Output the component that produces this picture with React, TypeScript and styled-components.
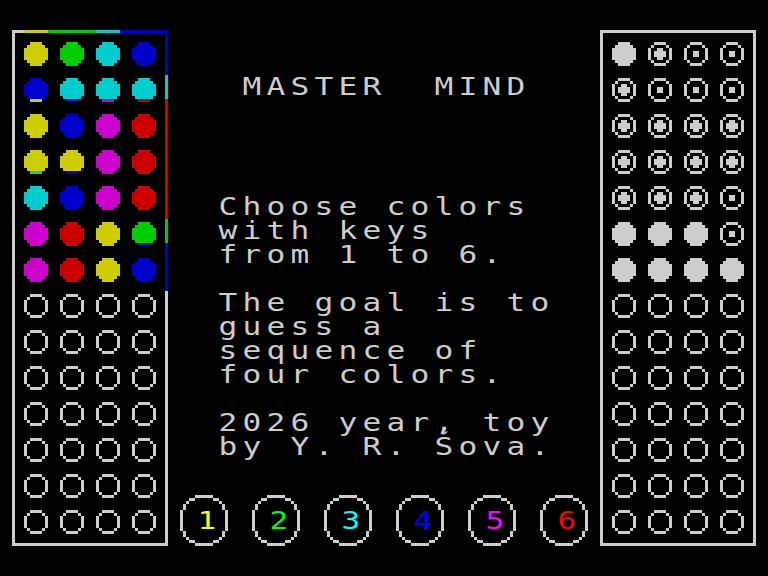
import React from "react"
import styled, { createGlobalStyle } from "styled-components"

const ink = {
    grey: "#cdcdcd",
    Y: "#cdcd00",
    G: "#00cd00",
    C: "#00cdcd",
    B: "#0000cd",
    M: "#cd00cd",
    R: "#cd0000",
}

const bright = ["#ffff00", "#00ff00", "#00ffff", "#0000ff", "#ff00ff", "#ff0000"]

type PegColor = "Y" | "G" | "C" | "B" | "M" | "R"

// guesses, top to bottom
const guesses: PegColor[][] = [
    ["Y", "G", "C", "B"],
    ["B", "C", "C", "C"],
    ["Y", "B", "M", "R"],
    ["Y", "Y", "M", "R"],
    ["C", "B", "M", "R"],
    ["M", "R", "Y", "G"],
    ["M", "R", "Y", "B"],
]

// F = right place, D = right colour, S = miss
const marks: string[] = ["FDSS", "DSSS", "DDDD", "DDDD", "DDDS", "FFFS", "FFFF"]

const TOTAL_ROWS = 14

const shapes: Record<string, string[]> = {
    filled: ["..XXXX..", ".XXXXXX.", "XXXXXXXX", "XXXXXXXX", "XXXXXXXX", "XXXXXXXX", ".XXXXXX.", "..XXXX.."],
    ring: ["..XXXX..", ".X....X.", "X......X", "X......X", "X......X", "X......X", ".X....X.", "..XXXX.."],
    bigDot: ["..XXXX..", ".X....X.", "X..XX..X", "X.XXXX.X", "X.XXXX.X", "X..XX..X", ".X....X.", "..XXXX.."],
    smallDot: ["..XXXX..", ".X....X.", "X......X", "X..XX..X", "X..XX..X", "X......X", ".X....X.", "..XXXX.."],
    key: [
        ".....XXXXXX.....",
        "...XX......XX...",
        "..X..........X..",
        ".X............X.",
        ".X............X.",
        "X..............X",
        "X..............X",
        "X..............X",
        "X..............X",
        "X..............X",
        "X..............X",
        "X..............X",
        ".X............X.",
        ".X............X.",
        "..X..........X..",
        "...XX......XX...",
        ".....XXXXXX.....",
    ],
}

const markShape: Record<string, string> = { F: "filled", D: "bigDot", S: "smallDot" }

interface IPixelProps {
    rows: string[];
    color: string;
    lastColor?: string;
}

// draws a tiny bitmap, one rect per run of pixels
const Pixels: React.FC<IPixelProps> = ({ rows, color, lastColor }) => {
    const w = rows[0].length
    const h = rows.length
    const rects: React.ReactNode[] = []
    rows.forEach((row, y) => {
        let x = 0
        while (x < w) {
            if (row[x] === "X") {
                let end = x
                while (end < w && row[end] === "X") end++
                rects.push(
                    <rect key={`${y}-${x}`} x={x} y={y} width={end - x} height={1}
                        fill={y === h - 1 && lastColor ? lastColor : color} />
                )
                x = end
            } else {
                x++
            }
        }
    })
    return (
        <svg width={w * 3} height={h * 3} viewBox={`0 0 ${w} ${h}`} shapeRendering="crispEdges">
            {rects}
        </svg>
    )
}

export default function App() {
    const pegRows = Array.from({ length: TOTAL_ROWS }, (_, i) => i)

    return (
        <>
            <GlobalStyle />
            <Screen>
                <Panel>
                    {pegRows.map(r =>
                        [0, 1, 2, 3].map(c => {
                            const guess = guesses[r]
                            if (!guess) {
                                return <Slot key={`${r}-${c}`}><Pixels rows={shapes.ring} color={ink.grey} /></Slot>
                            }
                            // colour clash: the bottom line of odd rows takes the ink of the row below
                            const below = r % 2 === 1 && guesses[r + 1] ? ink[guesses[r + 1][c]] : undefined
                            return (
                                <Slot key={`${r}-${c}`}>
                                    <Pixels rows={shapes.filled} color={ink[guess[c]]} lastColor={below} />
                                </Slot>
                            )
                        })
                    )}
                    <ClashTop />
                    <ClashRight />
                </Panel>

                <Center>
                    <Title>MASTER  MIND</Title>
                    <Body>
                        <Line>Choose colors</Line>
                        <Line>with keys</Line>
                        <Line>from 1 to 6.</Line>
                        <Line> </Line>
                        <Line>The goal is to</Line>
                        <Line>guess a</Line>
                        <Line>sequence of</Line>
                        <Line>four colors.</Line>
                        <Line> </Line>
                        <Line>2026 year, toy</Line>
                        <Line>by Y. R. Śova.</Line>
                    </Body>
                    <Keys>
                        {bright.map((color, i) =>
                            <Key key={i}>
                                <Pixels rows={shapes.key} color={ink.grey} />
                                <Digit $color={color}>{i + 1}</Digit>
                            </Key>
                        )}
                    </Keys>
                </Center>

                <Panel>
                    {pegRows.map(r =>
                        [0, 1, 2, 3].map(c => {
                            const m = marks[r]
                            const shape = m ? shapes[markShape[m[c]]] : shapes.ring
                            return <Slot key={`${r}-${c}`}><Pixels rows={shape} color={ink.grey} /></Slot>
                        })
                    )}
                </Panel>
            </Screen>
        </>
    )
}

const GlobalStyle = createGlobalStyle`
    html, body {
        margin: 0;
        padding: 0;
        background: #000;
        overflow: hidden;
    }
`

const Screen = styled.div`
    width: 768px;
    height: 576px;
    box-sizing: border-box;
    padding: 30px 12px 0;
    background: #000;
    display: flex;
    align-items: flex-start;
`

const Panel = styled.div`
    position: relative;
    width: 156px;
    height: 516px;
    box-sizing: border-box;
    border: 3px solid ${ink.grey};
    padding: 9px;
    display: grid;
    grid-template-columns: repeat(4, 24px);
    grid-auto-rows: 24px;
    gap: 12px;
`

const Slot = styled.div`
    width: 24px;
    height: 24px;
    svg {
        display: block;
    }
`

const ClashTop = styled.div`
    position: absolute;
    top: -3px;
    left: -3px;
    width: 156px;
    height: 3px;
    background: linear-gradient(to right,
        ${ink.grey} 0 12px,
        ${ink.Y} 12px 36px,
        ${ink.G} 36px 84px,
        ${ink.C} 84px 108px,
        ${ink.B} 108px 156px);
`

const ClashRight = styled.div`
    position: absolute;
    top: -3px;
    right: -3px;
    width: 3px;
    height: 516px;
    background: linear-gradient(to bottom,
        ${ink.B} 0 45px,
        ${ink.C} 45px 69px,
        ${ink.R} 69px 189px,
        ${ink.G} 189px 213px,
        ${ink.B} 213px 261px,
        ${ink.grey} 261px 516px);
`

const Center = styled.div`
    width: 432px;
    height: 516px;
    display: flex;
    flex-direction: column;
`

const Line = styled.div`
    height: 24px;
    line-height: 24px;
    white-space: pre;
    font-family: "DejaVu Sans Mono", "Liberation Mono", monospace;
    font-size: 24px;
    letter-spacing: 4.01px;
    padding-left: 2px;
    color: ${ink.grey};
    transform: scaleX(1.3);
    transform-origin: left center;
`

const Title = styled(Line)`
    margin-top: 45px;
    margin-left: 72px;
`

const Body = styled.div`
    margin-top: 96px;
    margin-left: 48px;
    display: flex;
    flex-direction: column;
`

const Keys = styled.div`
    margin-top: 36px;
    padding-left: 12px;
    display: flex;
    gap: 24px;
`

const Key = styled.div`
    display: grid;
    width: 48px;
    height: 51px;

    svg, span {
        grid-area: 1 / 1;
    }

    svg {
        display: block;
    }
`

const Digit = styled.span<{ $color: string }>`
    align-self: start;
    justify-self: start;
    margin: 14px 0 0 15px;
    width: 24px;
    height: 24px;
    line-height: 24px;
    font-family: "DejaVu Sans Mono", "Liberation Mono", monospace;
    font-size: 24px;
    padding-left: 2px;
    color: ${p => p.$color};
    transform: scaleX(1.3);
    transform-origin: left center;
`
